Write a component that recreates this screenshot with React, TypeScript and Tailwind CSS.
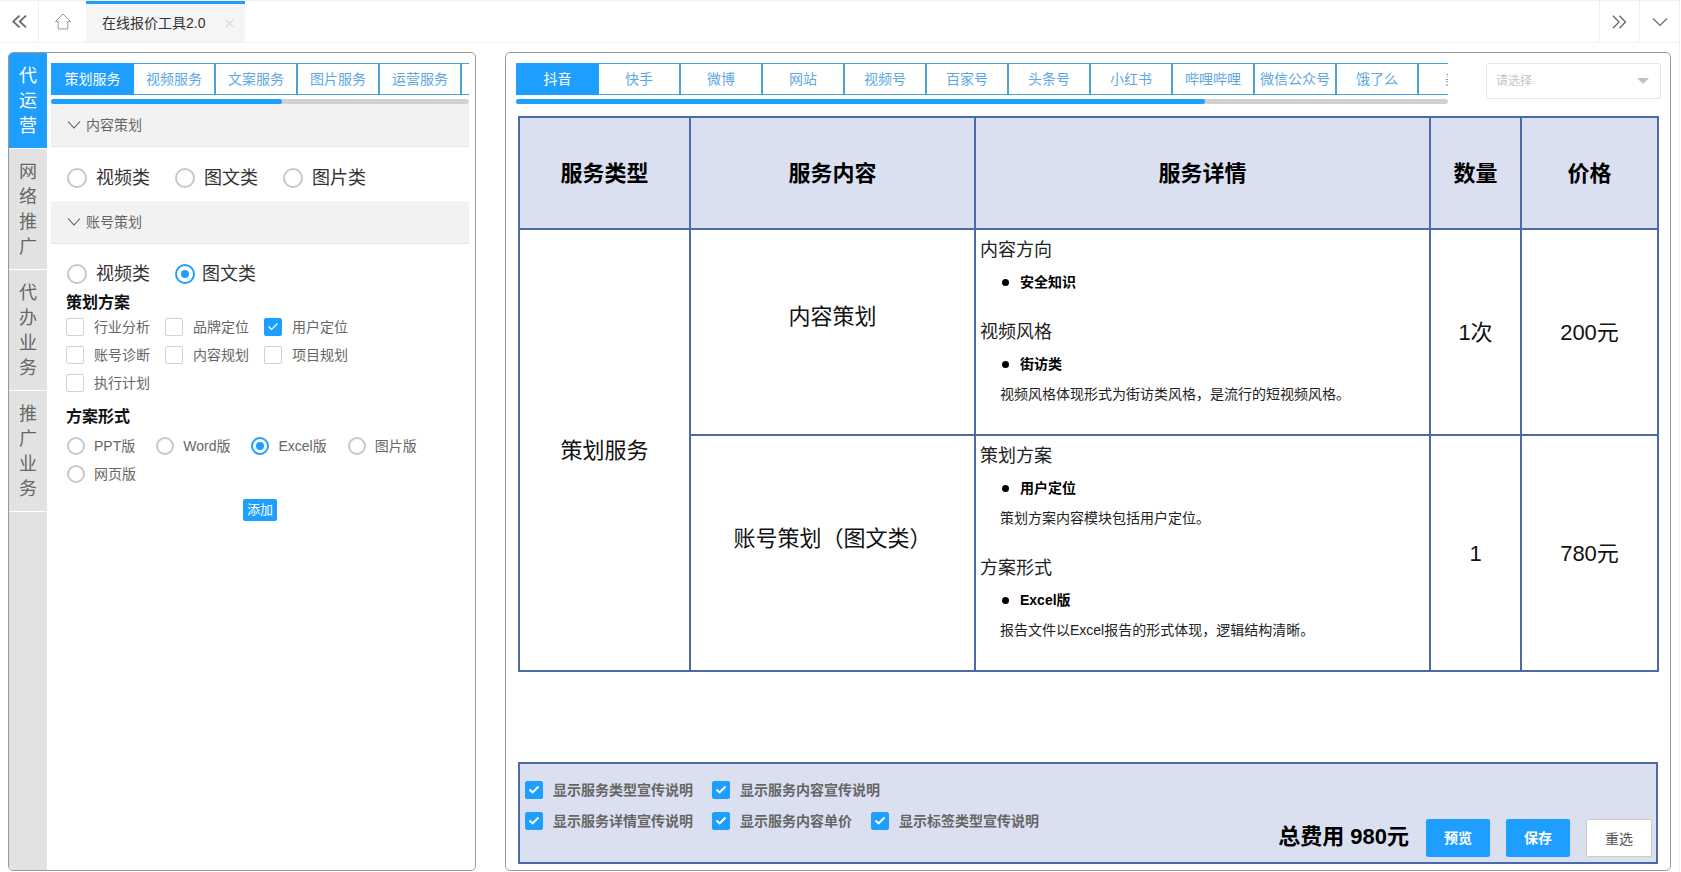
import React from "react";

function Radio({ on = false, size = 20 }: { on?: boolean; size?: number }) {
  return (
    <span
      className={`flex shrink-0 items-center justify-center rounded-full border-2 ${on ? "border-[#1E9FFF]" : "border-[#c8c8c8]"}`}
      style={{ width: size, height: size }}
    >
      {on && <span className="h-[8px] w-[8px] rounded-full bg-[#1E9FFF]" />}
    </span>
  );
}

function Tick({ on = false, bold = false }: { on?: boolean; bold?: boolean }) {
  return (
    <span
      className={`flex h-[18px] w-[18px] shrink-0 items-center justify-center rounded-[2px] border ${on ? "border-[#1E9FFF] bg-[#1E9FFF]" : "border-[#d2d2d2] bg-white"}`}
    >
      {on && (
        <svg width="12" height="12" viewBox="0 0 12 12" fill="none">
          <path d="M1.5 5.5 4.6 8.4 10.5 2.5" stroke="white" strokeWidth={bold ? 2 : 1.2} />
        </svg>
      )}
    </span>
  );
}

function TabStrip({ items, clip, thumb }: { items: string[]; clip: number; thumb: number }) {
  return (
    <div style={{ width: clip }}>
      <div className="flex h-[32px] overflow-hidden">
        {items.map((t, i) => (
          <div
            key={i}
            className={`flex h-[32px] shrink-0 items-center justify-center text-[14px] ${
              i === 0
                ? "w-[83px] bg-[#1E9FFF] text-white"
                : "w-[82px] border-y border-r-2 border-[#4f9fd8] text-[#5ea7e4]"
            }`}
          >
            {t}
          </div>
        ))}
      </div>
      <div className="mt-[4px] h-[5px] w-full rounded-[3px] bg-[#d2d2d2]">
        <div className="h-[5px] rounded-[3px] bg-[#1E9FFF]" style={{ width: thumb }} />
      </div>
    </div>
  );
}

function Header({ title }: { title: string }) {
  return (
    <div className="flex h-[43px] items-center border-b border-[#e6e6e6] bg-[#f2f2f2] pl-[16px]">
      <svg width="14" height="10" viewBox="0 0 14 10" fill="none">
        <path d="M1 1.5 7 8l6-6.5" stroke="#555" strokeWidth="1.1" />
      </svg>
      <span className="ml-[5px] text-[14px] text-[#666]">{title}</span>
    </div>
  );
}

function BigRadio({ label, on = false, gap = 9, right = 25 }: { label: string; on?: boolean; gap?: number; right?: number }) {
  return (
    <div className="flex items-center" style={{ marginRight: right }}>
      <Radio on={on} />
      <span className="text-[18px] leading-[24px] text-[#333]" style={{ marginLeft: gap }}>
        {label}
      </span>
    </div>
  );
}

function SmallCheck({ label, on = false }: { label: string; on?: boolean }) {
  return (
    <div className="flex h-[28px] w-[99px] items-center">
      <Tick on={on} />
      <span className="ml-[10px] text-[14px] text-[#666]">{label}</span>
    </div>
  );
}

function SmallRadio({ label, on = false }: { label: string; on?: boolean }) {
  return (
    <div className="mr-[21px] flex h-[28px] items-center">
      <Radio on={on} size={18} />
      <span className="ml-[9px] text-[14px] text-[#666]">{label}</span>
    </div>
  );
}

function BarCheck({ label, width }: { label: string; width: number }) {
  return (
    <div className="flex items-center" style={{ width }}>
      <Tick on bold />
      <span className="ml-[10px] whitespace-nowrap text-[14px] font-bold leading-[18px] text-[#666]">{label}</span>
    </div>
  );
}

const sideGroups = [
  { chars: ["代", "运", "营"], cls: "h-[96px] bg-[#1E9FFF] pt-[1px] text-white" },
  { chars: ["网", "络", "推", "广"], cls: "h-[121px] bg-[#e2e2e2] pt-[2px] text-[#666]" },
  { chars: ["代", "办", "业", "务"], cls: "h-[121px] bg-[#e2e2e2] pt-[2px] text-[#666]" },
  { chars: ["推", "广", "业", "务"], cls: "h-[121px] bg-[#e2e2e2] pt-[2px] text-[#666]" },
];

function Heading({ children, top = 0 }: { children: React.ReactNode; top?: number }) {
  return (
    <div className="h-[24px] pl-[4px] text-[18px] leading-[24px] text-[#222]" style={{ marginTop: top }}>
      {children}
    </div>
  );
}

function Bullet({ children }: { children: React.ReactNode }) {
  return (
    <ul className="mt-[10px] pl-[26px] text-[14px] font-bold leading-[20px] text-black">
      <li className="flex items-center">
        <span className="mr-[11px] h-[7px] w-[7px] rounded-full bg-black" />
        {children}
      </li>
    </ul>
  );
}

function Para({ children }: { children: React.ReactNode }) {
  return <p className="mt-[10px] pl-[24px] text-[14px] leading-[20px] text-[#222]">{children}</p>;
}

const th = "border-2 border-[#4c69a8] text-center text-[22px] font-bold text-black";
const td = "border-2 border-[#4c69a8] text-center text-[22px] text-[#111]";

export default function App() {
  return (
    <div
      className="h-[872px] w-[1680px] overflow-hidden border-r border-[#efefef] bg-white"
      style={{ fontFamily: '"Liberation Sans", "Noto Sans CJK SC", sans-serif' }}
    >
      {/* top bar */}
      <div className="flex h-[43px] items-stretch border-y border-[#f0f0f0] bg-white">
        <div className="flex w-[39px] items-center justify-center border-r border-[#f0f0f0]">
          <svg width="15" height="13" viewBox="0 0 15 13" fill="none">
            <path d="M7.5.7 1.2 6.5l6.3 5.8M14 .7 7.7 6.5l6.3 5.8" stroke="#666" strokeWidth="1.7" />
          </svg>
        </div>
        <div className="flex w-[47px] items-center justify-center">
          <svg width="18" height="17" viewBox="0 0 18 17" fill="none">
            <path d="M9 1 1.5 8.5h2.7V16h9.6V8.5h2.7L9 1Z" stroke="#999" strokeWidth="1" />
          </svg>
        </div>
        <div className="flex w-[159px] items-center border-t-[3px] border-[#1E9FFF] bg-[#f5f5f5] pl-[16px]">
          <span className="text-[14px] text-[#333]">在线报价工具2.0</span>
          <svg className="ml-[20px]" width="9" height="9" viewBox="0 0 9 9" fill="none">
            <path d="M1 1l7 7M8 1 1 8" stroke="#c8c8c8" strokeWidth="1" />
          </svg>
        </div>
        <div className="flex-1" />
        <div className="flex w-[40px] items-center justify-center border-l border-[#f0f0f0]">
          <svg width="15" height="14" viewBox="0 0 15 14" fill="none">
            <path d="M1 .7 7 7l-6 6.3M7.5.7 13.5 7l-6 6.3" stroke="#666" strokeWidth="1.3" />
          </svg>
        </div>
        <div className="flex w-[40px] items-center justify-center border-l border-[#f0f0f0]">
          <svg width="16" height="10" viewBox="0 0 16 10" fill="none">
            <path d="M1 1.5 8 8.5l7-7" stroke="#666" strokeWidth="1.1" />
          </svg>
        </div>
      </div>

      {/* body */}
      <div className="flex pl-[8px] pt-[9px]">
        {/* left panel */}
        <div className="flex h-[819px] w-[468px] overflow-hidden rounded-[5px] border border-[#999]">
          <div className="flex w-[38px] shrink-0 flex-col bg-[#e2e2e2]">
            {sideGroups.map((g, i) => (
              <div key={i} className={`flex flex-col items-center justify-center border-b border-white text-[18px] leading-[25px] ${g.cls}`}>
                {g.chars.map((c, j) => (
                  <span key={j}>{c}</span>
                ))}
              </div>
            ))}
          </div>
          <div className="flex-1 pl-[4px] pr-[6px] pt-[10px]">
            <TabStrip items={["策划服务", "视频服务", "文案服务", "图片服务", "运营服务", ""]} clip={418} thumb={231} />
            <Header title="内容策划" />
            <div className="flex h-[54px] items-center pl-[16px] pt-[8px]">
              <BigRadio label="视频类" />
              <BigRadio label="图文类" />
              <BigRadio label="图片类" />
            </div>
            <Header title="账号策划" />
            <div className="flex h-[44px] items-center pl-[16px] pt-[16px]">
              <BigRadio label="视频类" />
              <BigRadio label="图文类" on gap={7} />
            </div>
            <div className="pl-[15px]">
              <div className="mt-[3px] h-[24px] text-[16px] font-bold leading-[24px] text-[#111]">策划方案</div>
              <div className="mt-[-2px] flex w-[330px] flex-wrap">
                <SmallCheck label="行业分析" />
                <SmallCheck label="品牌定位" />
                <SmallCheck label="用户定位" on />
                <SmallCheck label="账号诊断" />
                <SmallCheck label="内容规划" />
                <SmallCheck label="项目规划" />
                <SmallCheck label="执行计划" />
              </div>
              <div className="mt-[8px] h-[24px] text-[16px] font-bold leading-[24px] text-[#111]">方案形式</div>
              <div className="mt-[3px] flex w-[390px] flex-wrap pl-[1px]">
                <SmallRadio label="PPT版" />
                <SmallRadio label="Word版" />
                <SmallRadio label="Excel版" on />
                <SmallRadio label="图片版" />
                <SmallRadio label="网页版" />
              </div>
            </div>
            <div className="mt-[11px] flex justify-center">
              <button className="h-[22px] w-[34px] rounded-[2px] bg-[#1E9FFF] text-[13px] leading-[22px] text-white">添加</button>
            </div>
          </div>
        </div>

        {/* right panel */}
        <div className="ml-[29px] flex h-[819px] w-[1166px] flex-col overflow-hidden rounded-[5px] border border-[#999] pl-[10px] pt-[10px]">
          <div className="flex h-[53px] shrink-0 items-start">
            <TabStrip
              items={["抖音", "快手", "微博", "网站", "视频号", "百家号", "头条号", "小红书", "哔哩哔哩", "微信公众号", "饿了么", "美团"]}
              clip={932}
              thumb={689}
            />
            <div className="ml-[38px] flex h-[36px] w-[175px] items-center justify-between rounded-[2px] border border-[#e6e6e6] pl-[9px] pr-[11px] text-[12px] text-[#c4c4c4]">
              <span>请选择</span>
              <span className="h-0 w-0 border-x-[6px] border-t-[6px] border-x-transparent border-t-[#c2c2c2]" />
            </div>
          </div>

          <div className="ml-[2px] w-[1140px] shrink-0">
            <table className="w-[1139px] table-fixed border-collapse">
              <colgroup>
                <col className="w-[171px]" />
                <col className="w-[285px]" />
                <col className="w-[455px]" />
                <col className="w-[91px]" />
                <col className="w-[137px]" />
              </colgroup>
              <thead>
                <tr className="h-[112px] bg-[#dae0f0]">
                  <th className={th}>服务类型</th>
                  <th className={th}>服务内容</th>
                  <th className={th}>服务详情</th>
                  <th className={th}>数量</th>
                  <th className={th}>价格</th>
                </tr>
              </thead>
              <tbody>
                <tr className="h-[206px]">
                  <td rowSpan={2} className={td}>策划服务</td>
                  <td className={`${td} pb-[31px]`}>内容策划</td>
                  <td className="border-2 border-[#4c69a8] pt-[8px] align-top">
                    <Heading>内容方向</Heading>
                    <Bullet>安全知识</Bullet>
                    <Heading top={28}>视频风格</Heading>
                    <Bullet>街访类</Bullet>
                    <Para>视频风格体现形式为街访类风格，是流行的短视频风格。</Para>
                  </td>
                  <td className={td}>1次</td>
                  <td className={td}>200元</td>
                </tr>
                <tr className="h-[236px]">
                  <td className={`${td} pb-[30px]`}>账号策划（图文类）</td>
                  <td className="border-2 border-[#4c69a8] pt-[8px] align-top">
                    <Heading>策划方案</Heading>
                    <Bullet>用户定位</Bullet>
                    <Para>策划方案内容模块包括用户定位。</Para>
                    <Heading top={28}>方案形式</Heading>
                    <Bullet>Excel版</Bullet>
                    <Para>报告文件以Excel报告的形式体现，逻辑结构清晰。</Para>
                  </td>
                  <td className={td}>1</td>
                  <td className={td}>780元</td>
                </tr>
              </tbody>
            </table>

            <div className="mt-[90px] flex h-[102px] w-[1140px] justify-between border-2 border-[#4c69a8] bg-[#dae0f0] pl-[5px] pr-[4px]">
              <div className="flex flex-col gap-[13px] pt-[17px]">
                <div className="flex">
                  <BarCheck label="显示服务类型宣传说明" width={187} />
                  <BarCheck label="显示服务内容宣传说明" width={180} />
                </div>
                <div className="flex">
                  <BarCheck label="显示服务详情宣传说明" width={187} />
                  <BarCheck label="显示服务内容单价" width={159} />
                  <BarCheck label="显示标签类型宣传说明" width={200} />
                </div>
              </div>
              <div className="flex items-end pb-[5px]">
                <span className="mb-[6px] mr-[17px] text-[22px] font-bold leading-[28px] text-black">总费用 980元</span>
                <button className="h-[38px] w-[64px] rounded-[2px] bg-[#1E9FFF] text-[14px] font-bold text-white">预览</button>
                <button className="ml-[16px] h-[38px] w-[64px] rounded-[2px] bg-[#1E9FFF] text-[14px] font-bold text-white">保存</button>
                <button className="ml-[16px] h-[38px] w-[66px] rounded-[2px] border border-[#c9c9c9] bg-white pt-[2px] text-[14px] text-[#555]">重选</button>
              </div>
            </div>
          </div>
        </div>
      </div>
    </div>
  );
}
